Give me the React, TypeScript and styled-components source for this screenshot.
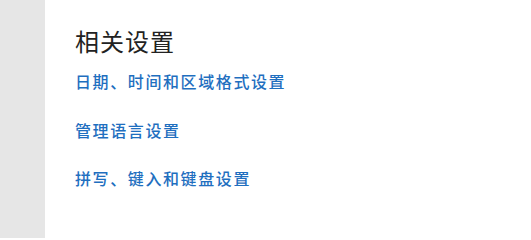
import styled, { createGlobalStyle } from "styled-components";

const GlobalStyle = createGlobalStyle`
  html, body {
    margin: 0;
    padding: 0;
    background: #ffffff;
  }
  #root {
    height: 238px;
  }
`;

const links = ["日期、时间和区域格式设置", "管理语言设置", "拼写、键入和键盘设置"];

export default function App() {
  return (
    <>
      <GlobalStyle />
      <Page>
        <NavStrip />
        <Content>
          <Heading>相关设置</Heading>
          <LinkList>
            {links.map((text) => (
              <SettingLink key={text} href="#">
                {text}
              </SettingLink>
            ))}
          </LinkList>
        </Content>
      </Page>
    </>
  );
}

const Page = styled.div`
  display: flex;
  width: 531px;
  height: 238px;
  background: #ffffff;
  font-family: "Noto Sans CJK SC", "Noto Sans", sans-serif;
`;

const NavStrip = styled.div`
  width: 45px;
  flex: none;
  background: #e6e6e6;
`;

const Content = styled.div`
  display: flex;
  flex-direction: column;
  padding: 26px 0 0 30px;
`;

const Heading = styled.h2`
  margin: 0;
  font-size: 24px;
  font-weight: 400;
  line-height: 30px;
  letter-spacing: 1px;
  color: #222222;
`;

const LinkList = styled.div`
  display: flex;
  flex-direction: column;
  gap: 26.5px;
  margin-top: 14px;
`;

const SettingLink = styled.a`
  display: block;
  font-size: 16px;
  font-weight: 500;
  line-height: 22px;
  letter-spacing: 1.6px;
  color: #1f6fbf;
  text-decoration: none;
`;
